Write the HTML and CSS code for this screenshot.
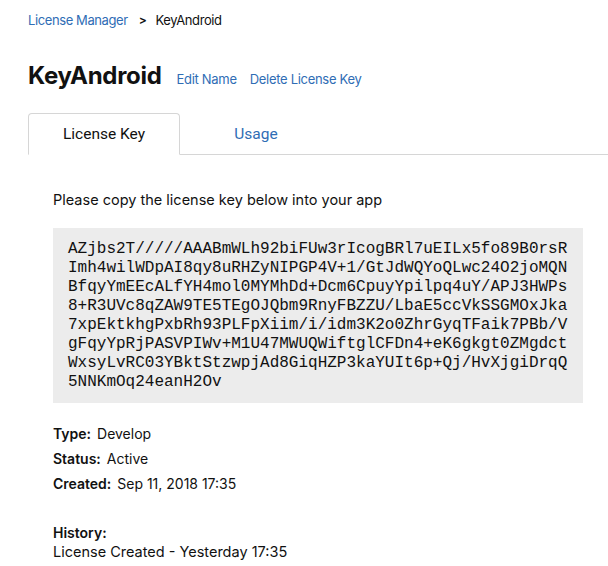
FILE: index.html
```html
<!DOCTYPE html>
<html>
<head>
<meta charset="utf-8">
<link rel="stylesheet" href="styles.css">
</head>
<body>
<div class="page">
  <nav class="breadcrumb">
    <a class="link" href="#">License Manager</a>
    <span class="sep">&gt;</span>
    <span class="current">KeyAndroid</span>
  </nav>
  <div class="title-row">
    <h1 class="title">KeyAndroid</h1>
    <a class="link action" href="#">Edit Name</a>
    <a class="link action" href="#">Delete License Key</a>
  </div>
  <div class="tabs">
    <div class="tab active">License Key</div>
    <div class="tab">Usage</div>
  </div>
  <div class="content">
    <p class="intro">Please copy the license key below into your app</p>
    <pre class="key">AZjbs2T/////AAABmWLh92biFUw3rIcogBRl7uEILx5fo89B0rsR
Imh4wilWDpAI8qy8uRHZyNIPGP4V+1/GtJdWQYoQLwc24O2joMQN
BfqyYmEEcALfYH4mol0MYMhDd+Dcm6CpuyYpilpq4uY/APJ3HWPs
8+R3UVc8qZAW9TE5TEgOJQbm9RnyFBZZU/LbaE5ccVkSSGMOxJka
7xpEktkhgPxbRh93PLFpXiim/i/idm3K2o0ZhrGyqTFaik7PBb/V
gFqyYpRjPASVPIWv+M1U47MWUQWiftglCFDn4+eK6gkgt0ZMgdct
WxsyLvRC03YBktStzwpjAd8GiqHZP3kaYUIt6p+Qj/HvXjgiDrqQ
5NNKmOq24eanH2Ov</pre>
    <div class="meta">
      <div class="meta-row"><span class="label">Type:</span> Develop</div>
      <div class="meta-row"><span class="label">Status:</span> Active</div>
      <div class="meta-row"><span class="label">Created:</span> Sep 11, 2018 17:35</div>
    </div>
    <div class="history">
      <div class="label">History:</div>
      <div class="history-line">License Created - Yesterday 17:35</div>
    </div>
  </div>
</div>
</body>
</html>
```
FILE: styles.css
```css
* { box-sizing: border-box; }
body {
  margin: 0;
  background: #fff;
  color: #111;
  font-family: Inter, "Noto Sans", sans-serif;
}
.page {
  padding: 12px 0 0 28px;
}
.link {
  color: #2f6db5;
  text-decoration: none;
}
.breadcrumb {
  font-size: 13px;
  line-height: 16px;
  letter-spacing: -0.4px;
  display: flex;
  align-items: center;
}
.sep {
  margin: 0 9px 0 11px;
  font-weight: 600;
  font-size: 12px;
}
.current { color: #111; }
.title-row {
  display: flex;
  align-items: baseline;
  margin-top: 33px;
}
.title {
  margin: 0 15px 0 0;
  font-size: 24px;
  line-height: 30px;
  font-weight: 700;
  letter-spacing: -0.3px;
}
.action {
  font-size: 13px;
  letter-spacing: -0.3px;
  margin-right: 13px;
}
.tabs {
  display: flex;
  margin-top: 22px;
  border-bottom: 1px solid #d6d6d6;
}
.tab {
  width: 152px;
  height: 42px;
  display: flex;
  align-items: center;
  justify-content: center;
  font-family: Roboto, sans-serif;
  font-size: 15.5px;
  color: #2f6db5;
  margin-bottom: -1px;
}
.tab.active {
  color: #111;
  background: #fff;
  border: 1px solid #d6d6d6;
  border-bottom: 1px solid #fff;
  border-radius: 4px 4px 0 0;
}
.content {
  padding-left: 25px;
}
.intro {
  margin: 35px 0 0;
  font-size: 14.5px;
  line-height: 20px;
}
.key {
  margin: 18px 0 0;
  width: 530px;
  background: #ececec;
  padding: 12px 15px 11px;
  font-family: "Liberation Mono", monospace;
  font-size: 16px;
  line-height: 19px;
  color: #111;
}
.meta {
  margin-top: 18px;
  font-size: 14px;
  line-height: 25px;
}
.label {
  font-weight: 600;
  margin-right: 2px;
}
.history {
  margin-top: 27px;
  font-size: 14px;
  line-height: 19px;
}
.history-line {
  font-size: 14.5px;
}
```
